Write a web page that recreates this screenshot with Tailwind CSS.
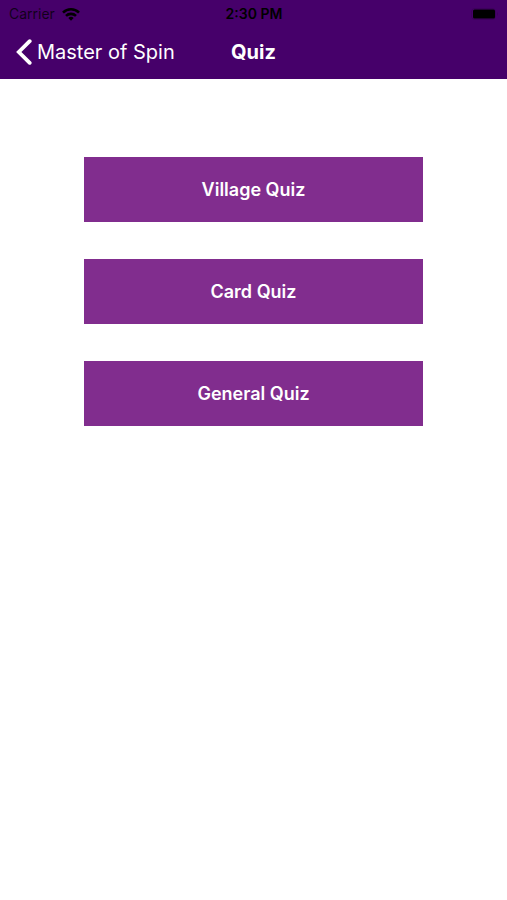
<!DOCTYPE html>
<html lang="en">
<head>
<meta charset="utf-8">
<meta name="viewport" content="width=device-width, initial-scale=1">
<title>Quiz</title>
<script src="https://cdn.jsdelivr.net/npm/@tailwindcss/browser@4"></script>
</head>
<body class="min-h-screen bg-white font-['Inter',sans-serif]">
<header class="bg-[#46006a] text-white">
  <div class="grid h-7 grid-cols-3 items-center pr-2 pl-[9px] text-[14px] leading-5 text-black">
    <div class="flex items-center gap-[7px]">
      <span class="text-black/75">Carrier</span>
      <svg class="h-[13px] w-[18px]" viewBox="0 0 18 13" fill="none" stroke="currentColor" stroke-width="2.6" aria-hidden="true">
        <path d="M1 4.6a11.4 11.4 0 0 1 16 0"/>
        <path d="M4 7.9a7.2 7.2 0 0 1 10 0"/>
        <path d="M6.300 10.100a3.900 3.900 0 0 1 5.400 0L9 12.800z" fill="currentColor" stroke="none"/>
      </svg>
    </div>
    <time class="text-center font-semibold">2:30 PM</time>
    <svg class="h-3 w-7 justify-self-end" viewBox="0 0 28 12" aria-hidden="true">
      <rect x=".5" y=".5" width="24" height="11" rx="3" fill="none" stroke="#000" stroke-opacity=".12"/>
      <rect x="2" y="1.500" width="22" height="9" rx="1.500" fill="#000"/>
      <path d="M26 4v4c1.300-.500 1.300-3.500 0-4z" fill="#000" fill-opacity=".12"/>
    </svg>
  </div>
  <nav class="grid h-[51px] grid-cols-[1fr_auto_1fr] items-center pb-[3px]">
    <a href="#" class="flex items-center gap-[5px] pl-4 text-[20px] leading-6 whitespace-nowrap">
      <svg class="h-[26px] w-4 shrink-0" viewBox="0 0 16 26" fill="none" stroke="currentColor" stroke-width="3.800" stroke-linecap="round" aria-hidden="true"><path d="M13.700 2.200 2.800 13l10.900 10.800"/></svg>
      Master of Spin
    </a>
    <h1 class="text-[20px] leading-6 font-bold">Quiz</h1>
  </nav>
</header>
<main class="mx-auto flex w-[67%] flex-col gap-[37px] pt-[78px]">
  <button type="button" class="h-[65px] bg-[#812d8e] text-[18px] leading-6 font-semibold text-white">Village Quiz</button>
  <button type="button" class="h-[65px] bg-[#812d8e] text-[18px] leading-6 font-semibold text-white">Card Quiz</button>
  <button type="button" class="h-[65px] bg-[#812d8e] text-[18px] leading-6 font-semibold text-white">General Quiz</button>
</main>
</body>
</html>
